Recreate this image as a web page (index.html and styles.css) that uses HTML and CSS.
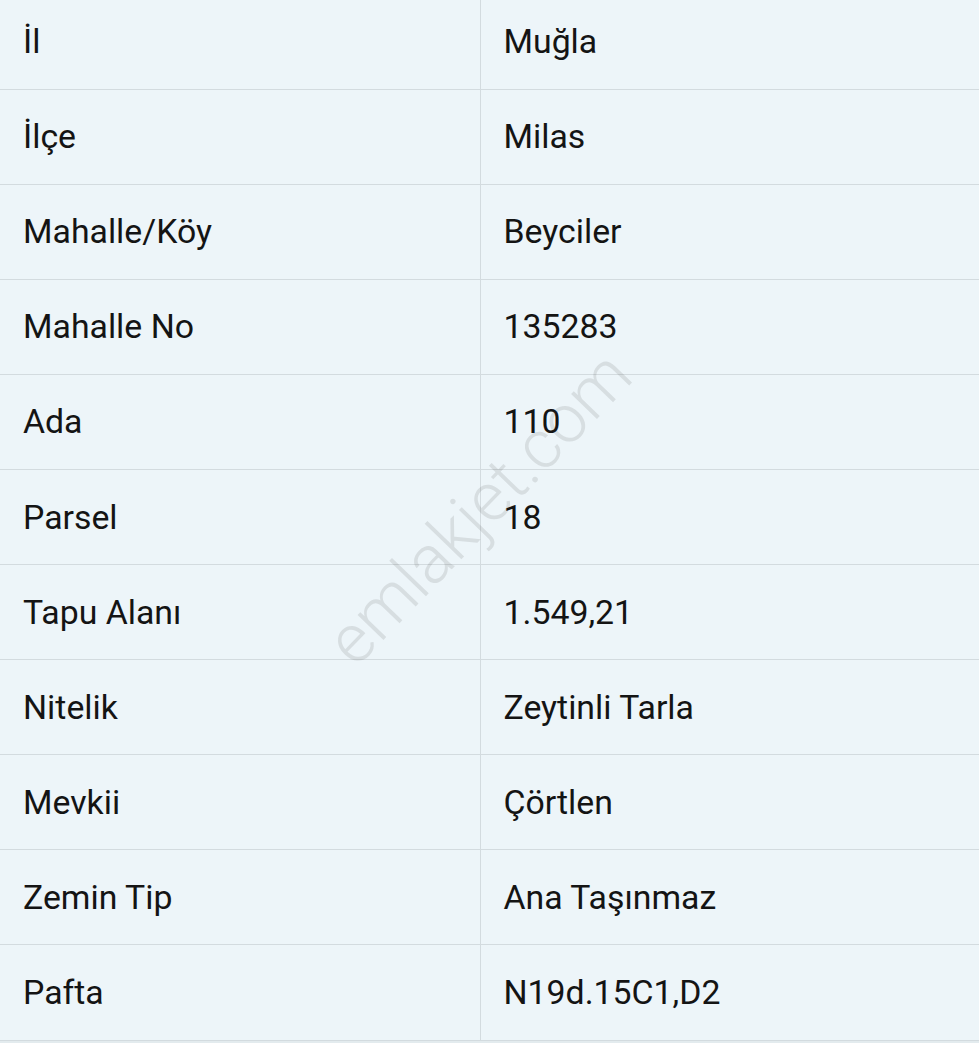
FILE: index.html
```html
<!DOCTYPE html>
<html lang="tr">
<head>
<meta charset="utf-8">
<link rel="stylesheet" href="styles.css">
</head>
<body>
<div class="page">
  <table class="info">
    <tbody>
      <tr><td>İl</td><td>Muğla</td></tr>
      <tr><td>İlçe</td><td>Milas</td></tr>
      <tr><td>Mahalle/Köy</td><td>Beyciler</td></tr>
      <tr><td>Mahalle No</td><td>135283</td></tr>
      <tr><td>Ada</td><td>110</td></tr>
      <tr><td>Parsel</td><td>18</td></tr>
      <tr><td>Tapu Alanı</td><td>1.549,21</td></tr>
      <tr><td>Nitelik</td><td>Zeytinli Tarla</td></tr>
      <tr><td>Mevkii</td><td>Çörtlen</td></tr>
      <tr><td>Zemin Tip</td><td>Ana Taşınmaz</td></tr>
      <tr><td>Pafta</td><td>N19d.15C1,D2</td></tr>
    </tbody>
  </table>
  <div class="watermark">emlakjet.com</div>
</div>
</body>
</html>
```
FILE: styles.css
```css
html, body {
  margin: 0;
  padding: 0;
  background: #e4ecef;
}
.page {
  position: relative;
  width: 979px;
  height: 1043px;
  overflow: hidden;
  background: #e3ebee;
}
.info {
  width: 100%;
  border-collapse: collapse;
  table-layout: fixed;
  margin-top: -6px;
  background: #edf5f9;
  font-family: Roboto, "Liberation Sans", sans-serif;
  font-size: 33.8px;
  color: #141414;
}
.info td {
  height: 95.1px;
  padding: 0 0 0 23px;
  border-bottom: 1px solid #d3dbdf;
  vertical-align: middle;
  box-sizing: border-box;
}
.info td:first-child {
  width: 480px;
  border-right: 1px solid #d3dbdf;
}
.watermark {
  position: absolute;
  left: 274px;
  top: 468px;
  width: 410px;
  text-align: center;
  font-family: Roboto, "Liberation Sans", sans-serif;
  font-weight: 300;
  font-size: 68px;
  color: rgba(60, 60, 60, 0.12);
  transform: rotate(-46deg);
  transform-origin: center;
  pointer-events: none;
  white-space: nowrap;
}
```
